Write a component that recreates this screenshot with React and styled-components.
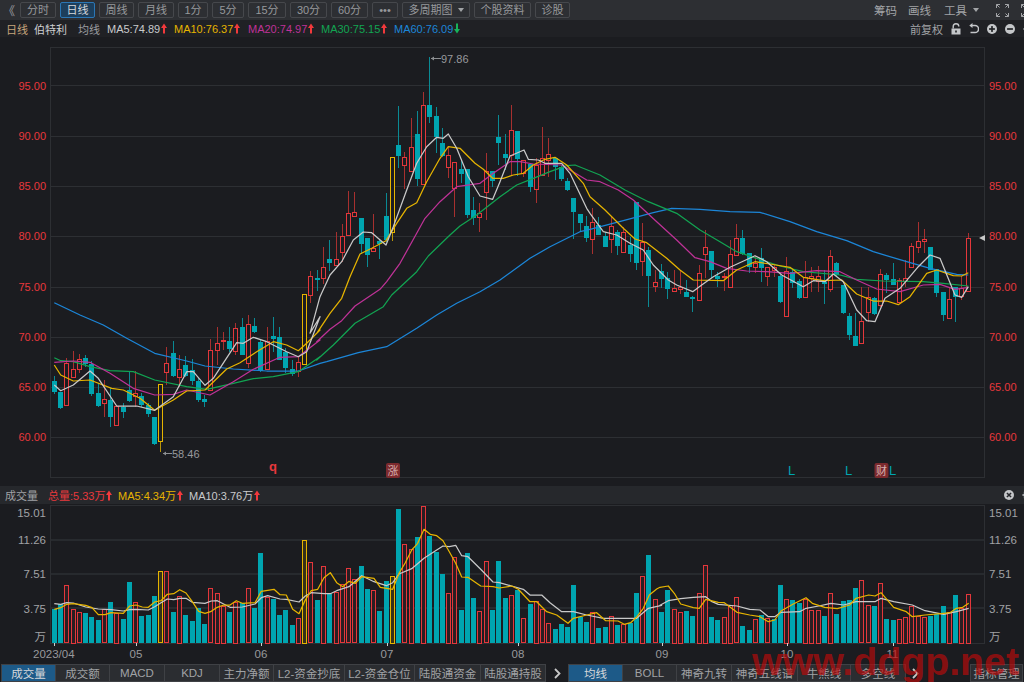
import styled, { createGlobalStyle } from 'styled-components';

const GlobalStyle = createGlobalStyle`
  html, body { margin: 0; padding: 0; background: #1b1c20; }
  body { font-family: "Liberation Sans", "Noto Sans CJK SC", sans-serif; }
`;

const TEAL = '#00a5b0';
const RED = '#e4373b';
const GOLD = '#e6b400';
const WHITE = '#c9c9c9';
const MAGENTA = '#bf3297';
const GREEN = '#12a452';
const BLUE = '#1c86d8';
const GRID = '#2d2f33';

const Page = styled.div`
  position: relative;
  width: 1024px;
  height: 682px;
  overflow: hidden;
  background: #1b1c20;
  display: flex;
  flex-direction: column;
  font-size: 11px;
  color: #9c9ea1;
`;

const Toolbar = styled.div`
  height: 20px;
  flex: none;
  display: flex;
  align-items: center;
  gap: 4px;
  background: #2d2f33;
  padding-left: 3px;
  overflow: hidden;
`;

const Collapse = styled.span`
  width: 13px;
  font-size: 12px;
  color: #9c9ea1;
`;

const ToolButton = styled.div`
  width: ${p => p.$w}px;
  height: 16px;
  flex: none;
  box-sizing: border-box;
  display: flex;
  align-items: center;
  justify-content: center;
  gap: 5px;
  border: 1px solid ${p => (p.$active ? '#2b77b5' : '#46484c')};
  border-radius: 2px;
  background: ${p => (p.$active ? '#1d3f5c' : 'transparent')};
  color: ${p => (p.$active ? '#d6d8db' : '#97999c')};
  font-size: 11px;
  line-height: 1;
`;

const ToolSpacer = styled.div`
  flex: 1;
`;

const ToolLink = styled.span`
  flex: none;
  width: ${p => p.$w}px;
  color: #a2a4a7;
  font-size: 11.5px;
  display: flex;
  align-items: center;
  gap: 6px;
  svg { flex: none; }
`;

const Caret = styled.i`
  width: 0;
  height: 0;
  border-left: 3.5px solid transparent;
  border-right: 3.5px solid transparent;
  border-top: 4px solid #a2a4a7;
`;

const InfoBar = styled.div`
  height: 17px;
  flex: none;
  display: flex;
  align-items: center;
  background: #202125;
  padding-left: 6px;
  overflow: hidden;
`;

const InfoText = styled.span`
  flex: none;
  width: ${p => (p.$w ? `${p.$w}px` : 'auto')};
  color: ${p => p.$color || '#9c9ea1'};
  display: flex;
  align-items: center;
  gap: 1px;
  white-space: nowrap;
`;

const InfoIcons = styled.div`
  margin-left: auto;
  display: flex;
  align-items: center;
  gap: 8px;
  width: 120px;
  flex: none;
  margin-right: -6px;
  svg { flex: none; }
`;

const ChartRow = styled.div`
  flex: none;
  display: flex;
  height: ${p => p.$h}px;
  padding-top: ${p => p.$top}px;
  box-sizing: border-box;
`;

const LeftAxis = styled.div`
  width: 50px;
  flex: none;
  display: flex;
  flex-direction: column;
  align-items: flex-end;
  padding: ${p => p.$pad}px 4px 0 0;
  box-sizing: border-box;
`;

const RightAxis = styled.div`
  width: 39px;
  flex: none;
  display: flex;
  flex-direction: column;
  align-items: flex-start;
  padding: ${p => p.$pad}px 0 0 4px;
  box-sizing: border-box;
`;

const PriceLabel = styled.div`
  height: 50.2px;
  line-height: 50.2px;
  color: #e8383c;
  font-size: 11px;
`;

const VolLabel = styled.div`
  height: 14px;
  line-height: 14px;
  margin-top: ${p => p.$gap}px;
  color: #a0a2a5;
  font-size: 11.5px;
`;

const Plot = styled.svg`
  display: block;
  flex: none;
  width: 935px;
  height: ${p => p.$h}px;
  overflow: visible;
`;

const PlotText = styled.text`
  font-family: "Liberation Sans", "Noto Sans CJK SC", sans-serif;
  font-size: ${p => p.$size || 11}px;
  font-weight: ${p => (p.$bold ? 700 : 400)};
  fill: ${p => p.$color || '#98999c'};
`;

const VolHeader = styled.div`
  height: 18px;
  flex: none;
  display: flex;
  align-items: center;
  background: #26282c;
  padding-left: 5px;
  overflow: hidden;
`;

const XAxis = styled.svg`
  display: block;
  flex: none;
  width: 1024px;
  height: 18px;
  overflow: visible;
`;

const TabBar = styled.div`
  height: 18px;
  flex: none;
  display: flex;
  align-items: stretch;
  padding-left: 1px;
  overflow: hidden;
`;

const Tab = styled.div`
  flex: none;
  width: ${p => p.$w}px;
  box-sizing: border-box;
  display: flex;
  align-items: center;
  justify-content: center;
  background: ${p => (p.$active ? '#1d5a88' : '#2b2d31')};
  color: ${p => (p.$active ? '#d6d8db' : '#a0a2a5')};
  border: 1px solid #3f4145;
  border-left-width: ${p => (p.$first ? 1 : 0)}px;
  font-size: 11.5px;
  white-space: nowrap;
  overflow: hidden;
`;

const TabArrow = styled.div`
  flex: none;
  width: ${p => p.$w}px;
  display: flex;
  align-items: center;
  justify-content: ${p => (p.$w > 30 ? 'flex-start' : 'center')};
  padding-left: ${p => (p.$w > 30 ? 6 : 0)}px;
  box-sizing: border-box;
`;

const Watermark = styled.div`
  position: absolute;
  left: 752px;
  top: 640px;
  font-family: "Liberation Sans", sans-serif;
  font-size: 39.3px;
  line-height: 42px;
  font-weight: 700;
  color: rgba(190, 10, 10, 0.68);
  white-space: nowrap;
  pointer-events: none;
`;

// [type, bodyTop, bodyBottom, wickTop, wickBottom], read off the chart in 3x crop coordinates
const candlesA = [
  ['c',243,277,228,282],['c',275,325,275,328],['r',190,317,173,317],['r',208,233,152,233],['r',178,208,162,220],
  ['c',175,192,165,200],['c',192,283,182,287],['c',280,317,250,320],['r',297,310,240,352],['c',300,352,265,380],
  ['r',318,376,318,376],['c',322,335,310,355],['c',270,302,213,305],['r',280,290,212,320],['c',288,316,280,320],
  ['c',316,342,308,350],['c',352,432,352,434],['y',252,424,252,455],['r',188,214,140,255],['c',160,228,122,230],
  ['r',208,232,166,260],['c',195,228,168,232],['c',210,243,177,255],['c',243,300,235,305],['c',297,306,285,320],
  ['r',150,270,117,270],['r',130,152,82,195],['r',121,123,95,150],['c',122,147,82,155],['r',85,155,70,165],
  ['c',82,165,55,165],['r',73,190,45,205],['c',77,97,55,100],['c',125,213,118,217],['r',122,205,80,205],
  ['c',108,118,50,155],['c',112,180,82,180],['c',155,205,145,218],['c',208,222,180,228],['r',187,215,170,230],
];
const candlesB = [
  ['y',733,943,733,943],['r',677,733,662,758],['c',684,690,660,723],['r',650,683,592,702],['c',628,640,570,662],
  ['r',628,645,547,645],['r',558,605,522,635],['r',488,555,423,555],['r',486,497,426,497],['c',505,582,505,612],
  ['c',563,616,563,650],['r',595,603,492,605],['c',572,582,568,628],['c',498,570,430,575],['y',322,547,322,572],
  ['c',286,318,168,355],['r',322,347,305,418],['r',292,365,205,365],['c',252,388,183,408],['r',165,402,127,402],
  ['c',165,200,20,218],['c',198,262,170,310],['c',280,318,235,320],['r',316,352,290,385],['r',335,414,335,500],
  ['c',358,372,330,400],['c',358,495,358,505],['c',480,503,440,525],['r',488,500,458,547],['r',362,425,310,510],
  ['c',362,393,362,410],['c',262,278,195,345],['c',313,325,252,360],['r',240,315,165,378],['c',243,327,243,378],
  ['r',330,370,330,380],['c',342,410,340,425],['r',345,417,325,458],['r',325,375,232,375],['r',313,330,265,380],
  ['c',325,350,320,390],['c',352,388,345,392],['c',392,420,385,423],['c',445,485,445,568],['c',492,520,492,545],
  ['c',528,565,498,575],['r',515,565,475,612],
];
const candlesC = [
  ['c',105,135,80,135],['c',138,170,125,170],['r',108,148,82,188],['c',125,167,120,195],['r',125,185,110,190],
  ['c',165,192,140,215],['c',36,220,36,240],['r',157,215,100,257],['c',180,257,170,352],['r',277,290,240,305],
  ['c',244,267,222,295],['c',264,298,245,328],['r',295,305,240,305],['r',290,295,240,312],['c',306,320,270,320],
  ['c',321,327,318,365],['r',248,330,225,330],['r',172,193,120,265],['c',183,240,183,265],['c',258,267,245,290],
  ['r',258,262,250,303],['r',192,290,150,290],['r',145,195,102,195],['c',145,192,120,195],['c',190,230,190,250],
  ['r',220,232,197,250],['c',205,235,175,275],['r',232,260,232,288],['r',232,240,225,262],['c',258,335,255,340],
  ['r',242,378,200,378],['c',245,280,240,295],['c',272,325,268,328],['r',260,320,212,325],['r',258,263,230,305],
  ['r',257,272,228,305],['c',275,282,240,342],['r',198,298,180,305],['c',218,255,215,262],['c',285,370,285,372],
  ['c',378,435,368,450],['c',438,468,370,468],['r',392,458,290,458],['r',320,365,290,395],['c',325,372,320,375],
  ['r',253,345,238,350],['c',255,270,248,310],['c',267,285,220,285],['r',270,335,265,338],['r',265,275,210,290],
  ['r',168,230,158,230],['r',153,170,97,190],['r',148,155,118,190],['c',170,240,170,240],['c',237,310,237,320],
  ['c',305,375,305,392],['r',328,385,292,385],['c',290,320,290,395],['r',295,320,258,330],['r',143,303,130,305],
];

const toReal = (rows, oy) => rows.map(([t, a, b, c, d]) => [t, oy + a / 3, oy + b / 3, oy + c / 3, oy + d / 3]);
const candles = [...toReal(candlesA, 300), ...toReal(candlesB, 50), ...toReal(candlesC, 190)];

// volume bars: type and top edge, same crop coordinates
const volA = 'c478 c462 r406 r476 r487 c489 c500 c510 r478 c457 r488 c508 c395 r457 c497 c495 c438 y364 r364 c486 r438 c495 c513 c474 c522 r415 r428 r468 c486 r455 c460 r415 c475 c310 r441 c447 c495 c479 c524 r503 y270 r337 c449 r347 c433 r425 r403 r355 r388 c347 c417 r421 c484 c393 y377 c178 r283 r297 c262 r168 c258 c305 c372 r428 r320 c479 c310 c444 r482 r334 c481 c334 c444 r436';
const volB = 'c270 r355 c312 r302 r328 r370 c387 c372 c382 c256 c350 c366 r335 c383 c380 r348 c376 r373 c368 c280 r227 c165 r298 c336 c270 r326 r335 c334 c348 r278 r195 c352 c360 r351 r314 r292 c377 c390 r358 c346 r355 c358 c256 r297 c299 c308 r297 r329 r329 c348 r278 c342 c304 c299 c265 r241 r316 c318 r248 c358 c361 r356 r351 r319 r348 r351 c348 c342 c318 r335 c286 r323 r281';
const parseVol = (str, oy) => str.split(' ').map(s => [s[0], oy + Number(s.slice(1)) / 3]);
const volumes = [...parseVol(volA, 450), ...parseVol(volB, 500)];

const seg = (ox, oy, pts) => pts.map(([x, y]) => [ox + x / 3, oy + y / 3]);
const toPoints = pts => pts.map(([x, y]) => `${x.toFixed(1)},${y.toFixed(1)}`).join(' ');

const lineWhite = [
  ...seg(40, 300, [[43,255],[62,272],[100,255],[150,213],[175,235],[230,318],[290,318],[344,331],[400,290],[440,215],[460,215],[495,256],[520,235],[590,128],[610,130],[640,112],[680,125],[740,155],[775,170],[800,155],[840,50]]),
  ...seg(300, 50, [[30,850],[60,740],[90,675],[125,635],[160,570],[190,546],[215,548],[258,585],[280,530],[320,420],[350,340],[380,290],[410,262],[430,265],[445,252],[470,295],[505,380],[540,438],[578,448],[600,395],[630,318],[672,300],[685,328],[715,330],[735,340],[785,340],[810,370],[860,475]]),
  ...seg(590, 190, [[0,70],[40,125],[80,135],[120,160],[160,180],[190,225],[235,270],[260,285],[308,305],[335,285],[370,260],[420,232],[495,197],[530,215],[575,255],[640,290],[670,272],[705,275],[730,252],[760,275],[800,360],[830,392],[855,395],[885,325],[930,295],[985,230],[1020,195],[1050,205],[1095,315],[1115,322],[1135,290]]),
];
const lineGold = [
  ...seg(40, 300, [[43,195],[62,225],[100,243],[150,240],[215,265],[250,270],[300,295],[344,331],[400,300],[440,273],[495,270],[560,207],[600,188],[650,155],[700,125],[740,135],[775,152],[800,130],[840,90]]),
  ...seg(300, 50, [[50,850],[90,790],[125,745],[150,680],[180,612],[215,595],[258,572],[290,520],[320,475],[350,458],[380,395],[420,325],[445,290],[480,295],[525,340],[550,358],[578,385],[610,385],[640,375],[670,370],[700,345],[735,328],[765,322],[800,345],[850,400]]),
  ...seg(590, 190, [[0,20],[45,60],[100,115],[135,147],[170,158],[230,205],[270,240],[310,270],[400,272],[440,240],[495,215],[540,222],[600,232],[640,262],[700,272],[755,270],[800,312],[850,333],[890,333],[925,344],[960,320],[1010,250],[1040,240],[1090,257],[1115,258],[1135,248]]),
];
const lineMagenta = [
  ...seg(40, 300, [[43,187],[100,183],[150,187],[210,220],[280,265],[344,285],[400,283],[440,270],[510,285],[580,245],[640,208],[720,172],[775,170],[840,120]]),
  ...seg(300, 50, [[50,875],[90,838],[125,812],[165,768],[240,718],[260,695],[300,640],[350,550],[375,505],[420,455],[470,410],[540,400],[580,370],[630,335],[660,335],[700,342],[785,345],[860,390],[900,395]]),
  ...seg(590, 190, [[85,0],[130,30],[200,95],[260,150],[315,203],[360,215],[410,235],[470,243],[530,245],[600,250],[680,242],[750,245],[800,270],[860,297],[930,305],[1000,285],[1050,283],[1095,298],[1135,292]]),
];
const lineGreen = [
  ...seg(40, 300, [[43,173],[62,182],[100,185],[150,200],[210,212],[280,215],[344,240],[440,260],[500,268],[580,250],[640,236],[700,230],[775,215],[840,170]]),
  ...seg(300, 50, [[50,930],[100,885],[130,855],[165,820],[250,770],[275,735],[350,665],[385,618],[450,555],[480,528],[530,495],[600,440],[650,405],[700,385],[750,365],[800,347],[825,345],[900,375]]),
  ...seg(590, 190, [[105,0],[175,35],[260,70],[330,120],[390,155],[440,185],[500,205],[570,228],[640,245],[750,255],[800,268],[880,273],[1000,275],[1060,280],[1135,288]]),
];
const lineBlue = [
  ...seg(40, 300, [[43,8],[120,45],[190,75],[260,115],[344,160],[440,183],[495,198],[580,207],[680,213],[775,213],[840,190]]),
  ...seg(300, 50, [[80,935],[175,908],[260,890],[350,835],[410,795],[470,760],[540,725],[600,690],[690,625],[750,590],[840,545]]),
  ...seg(590, 190, [[0,118],[100,92],[190,68],[245,55],[330,58],[420,65],[510,67],[600,95],[680,125],[770,152],[850,185],[940,212],[1020,235],[1100,253],[1135,255]]),
];
const volGold = [
  ...seg(0, 450, [[163,478],[182,473],[200,463],[220,461],[257,466],[276,473],[295,494],[315,494],[333,488],[370,490],[389,468],[408,465],[427,471],[445,472],[464,456],[483,452],[502,433],[521,431],[539,419],[558,429],[577,455],[596,484],[615,490],[634,484],[652,472],[671,465],[690,465],[709,452],[727,460],[765,458],[784,424],[822,418],[840,434],[859,435],[878,478],[897,491],[916,450],[934,422],[953,418],[972,383],[991,368],[1010,398],[1028,410],[1047,394],[1066,400],[1085,380],[1122,385],[1141,412],[1178,418],[1197,370],[1216,338],[1235,300],[1253,280],[1272,238],[1291,253],[1310,257],[1329,272],[1348,305],[1367,340],[1385,381],[1404,382],[1442,408],[1479,410],[1498,414]]),
  ...seg(340, 500, [[515,258],[535,268],[570,305],[590,305],[620,335],[650,345],[684,370],[700,355],[740,345],[770,338],[797,362],[834,363],[853,373],[872,368],[891,350],[910,325],[928,285],[950,267]]),
  ...seg(660, 500, [[0,262],[25,258],[43,280],[62,312],[100,323],[118,325],[137,298],[175,307],[193,308],[231,337],[269,345],[300,350],[325,365],[344,360],[363,333],[400,312],[438,293],[457,310],[494,322],[532,326],[569,315],[588,295],[626,285],[645,288],[663,278],[701,322],[739,335],[757,350],[795,345],[851,340],[870,338],[889,325],[908,322],[926,310]]),
];
const volWhite = [
  ...seg(0, 450, [[163,461],[182,463],[200,458],[220,459],[257,471],[295,477],[333,479],[370,483],[389,479],[408,478],[445,480],[464,470],[483,458],[502,447],[521,449],[539,445],[558,445],[577,457],[615,460],[634,453],[652,452],[690,472],[727,471],[765,462],[784,443],[803,437],[840,447],[859,448],[897,456],[916,438],[934,428],[972,431],[991,431],[1010,422],[1047,410],[1085,377],[1122,395],[1159,407],[1178,398],[1197,372],[1235,356],[1272,325],[1310,300],[1329,288],[1348,290],[1367,286],[1385,317],[1404,320],[1442,358],[1479,396],[1498,398]]),
  ...seg(340, 500, [[515,258],[550,268],[570,285],[605,285],[630,308],[665,335],[700,335],[740,345],[790,355],[890,355],[925,325],[965,316]]),
  ...seg(660, 500, [[0,316],[25,302],[62,296],[100,292],[137,290],[156,305],[175,313],[231,318],[269,328],[300,330],[325,350],[344,350],[363,337],[419,335],[438,325],[476,318],[513,310],[551,315],[588,305],[645,305],[663,295],[701,305],[757,315],[795,332],[851,343],[889,335],[926,325]]),
];

const barX = i => Math.round(53.8 + 6.26 * i);
const typeColor = { c: TEAL, r: RED, y: GOLD };
const wickColor = { c: '#0a8a94', r: '#a8302f', y: '#b8940a' };
const hollowFill = { r: '#2a1e22', y: '#35301a' };

function Candle({ i, data }) {
  const [type, top, bottom, wickTop, wickBottom] = data;
  const x = barX(i);
  const color = typeColor[type];
  return (
    <g shapeRendering="crispEdges">
      <rect x={x} y={wickTop} width={1} height={Math.max(wickBottom - wickTop, 1)} fill={wickColor[type]} />
      {type === 'c' ? (
        <rect x={x - 2} y={top} width={5} height={Math.max(bottom - top, 2)} fill={color} />
      ) : (
        <rect x={x - 1.5} y={Math.round(top) + 0.5} width={4} height={Math.max(Math.round(bottom - top), 1)} fill="#1b1c20" stroke={color} />
      )}
    </g>
  );
}

function VolumeBar({ i, data }) {
  const [type, top] = data;
  const x = barX(i);
  return (
    <g shapeRendering="crispEdges">
      {type === 'c' ? (
        <rect x={x - 2} y={top} width={5} height={643 - top} fill={TEAL} />
      ) : (
        <rect x={x - 1.5} y={Math.round(top) + 0.5} width={4} height={Math.round(642.5 - top)} fill={hollowFill[type]} stroke={typeColor[type]} />
      )}
    </g>
  );
}

function MaLine({ pts, color, width = 1.25 }) {
  return <polyline points={toPoints(pts)} fill="none" stroke={color} strokeWidth={width} strokeLinejoin="round" />;
}

function Arrow({ up = true }) {
  const color = up ? '#f2393c' : '#17b35b';
  return (
    <svg width="6" height="11" viewBox="0 0 6 11">
      {up ? <path d="M3 0.5 L6 5 L4 5 L4 10.5 L2 10.5 L2 5 L0 5 Z" fill={color} /> : <path d="M3 10.5 L6 6 L4 6 L4 0.5 L2 0.5 L2 6 L0 6 Z" fill={color} />}
    </svg>
  );
}

function RoundIcon({ kind, size = 10 }) {
  return (
    <svg width={size} height={size} viewBox="0 0 12 12">
      <circle cx="6" cy="6" r="6" fill="#c4c6c9" />
      {kind !== 'close' && <rect x="2.5" y="5" width="7" height="2" fill="#202125" />}
      {kind === 'plus' && <rect x="5" y="2.5" width="2" height="7" fill="#202125" />}
      {kind === 'close' && <path d="M3.5 3.5 L8.5 8.5 M8.5 3.5 L3.5 8.5" stroke="#26282c" strokeWidth="1.8" />}
    </svg>
  );
}

function LockIcon() {
  return (
    <svg width="10" height="12" viewBox="0 0 10 12">
      <path d="M2.2 5.5 V3.5 A2.8 2.8 0 0 1 7.8 3.5" fill="none" stroke="#c4c6c9" strokeWidth="1.4" />
      <path d="M0.5 5.5 H9.5 V11.5 H0.5 Z M4.2 7.5 V9.5 H5.8 V7.5 Z" fill="#c4c6c9" fillRule="evenodd" />
    </svg>
  );
}

function UndoIcon() {
  return (
    <svg width="10" height="11" viewBox="0 0 10 11">
      <path d="M2.5 2.5 H6 A3.2 3.2 0 0 1 6 9.6 H1.5" fill="none" stroke="#c4c6c9" strokeWidth="1.5" />
      <path d="M3.5 0 V5 L0.3 2.5 Z" fill="#c4c6c9" />
    </svg>
  );
}

function ExpandIcon() {
  return (
    <svg width="13" height="13" viewBox="0 0 13 13" fill="none" stroke="#a2a4a7" strokeWidth="1">
      <path d="M0.5 4 V0.5 H4 M0.5 0.5 L3.5 3.5 M9 0.5 H12.5 V4 M12.5 0.5 L9.5 3.5 M0.5 9 V12.5 H4 M0.5 12.5 L3.5 9.5 M12.5 9 V12.5 H9 M12.5 12.5 L9.5 9.5" />
    </svg>
  );
}

function CutPlus() {
  return (
    <svg width="10" height="10" viewBox="0 0 12 12" fill="none" stroke="#c4c6c9" strokeWidth="1.6">
      <path d="M6 0.5 V11.5 M0.5 6 H11.5 M3 3 H9 V9 H3 Z" />
    </svg>
  );
}

function ChevronRight() {
  return (
    <svg width="7" height="11" viewBox="0 0 7 11">
      <path d="M1 1 L5.5 5.5 L1 10" fill="none" stroke="#c8c8c8" strokeWidth="1.8" />
    </svg>
  );
}

const priceAxis = ['95.00', '90.00', '85.00', '80.00', '75.00', '70.00', '65.00', '60.00'];
const priceGrid = [85.5, 136, 186, 236.5, 287, 337, 387, 437];
const volAxis = [['15.01', 1], ['11.26', 13], ['7.51', 20], ['3.75', 21], ['万', 14]];
const months = [['2023/04', 54], ['05', 136], ['06', 261], ['07', 387], ['08', 518], ['09', 662], ['10', 787], ['11', 893]];

const periods = [
  ['分时', 36], ['日线', 35, true], ['周线', 35], ['月线', 36], ['1分', 30], ['5分', 32], ['15分', 38],
  ['30分', 37], ['60分', 37], ['•••', 26],
];
const tabsLeft = [
  ['成交量', 55, true], ['成交额', 54], ['MACD', 55], ['KDJ', 55], ['主力净额', 54], ['L2-资金抄底', 71],
  ['L2-资金仓位', 70], ['陆股通资金', 66], ['陆股通持股', 65],
];
const tabsRight = [
  ['均线', 55, true], ['BOLL', 54], ['神奇九转', 55], ['神奇五线谱', 66], ['牛熊线', 53], ['多空线', 55],
];

function PriceChart() {
  return (
    <Plot $h={431} viewBox="50 47 935 431">
      <rect x="50.5" y="47.5" width="934" height="430" fill="none" stroke={GRID} />
      {priceGrid.map(y => <line key={y} x1="50" x2="985" y1={y} y2={y} stroke={GRID} shapeRendering="crispEdges" />)}
      {candles.map((c, i) => <Candle key={i} i={i} data={c} />)}
      <MaLine pts={lineBlue} color={BLUE} />
      <MaLine pts={lineGreen} color={GREEN} />
      <MaLine pts={lineMagenta} color={MAGENTA} />
      <MaLine pts={lineGold} color={GOLD} />
      <MaLine pts={lineWhite} color={WHITE} />
      <line x1="431" x2="441" y1="58.5" y2="58.5" stroke="#8d8f92" />
      <path d="M431 58.5 l3 -2 v4 Z" fill="#8d8f92" />
      <PlotText x="441" y="62.5">97.86</PlotText>
      <line x1="163" x2="172" y1="453.5" y2="453.5" stroke="#8d8f92" />
      <path d="M163 453.5 l3 -2 v4 Z" fill="#8d8f92" />
      <PlotText x="172" y="457.5">58.46</PlotText>
      <path d="M979 238 l6 -3 v6 Z" fill="#c8c8c8" />
      <PlotText x="269" y="471" $size={13} $bold $color="#e8383c">q</PlotText>
      <rect x="386" y="463" width="14" height="15" rx="2" fill="#7c2a2e" />
      <PlotText x="387.5" y="475" $color="#d8b0b0">涨</PlotText>
      <PlotText x="788" y="475" $size={13} $color={TEAL}>L</PlotText>
      <PlotText x="845" y="475" $size={13} $color={TEAL}>L</PlotText>
      <rect x="874.5" y="463" width="14" height="15" rx="2" fill="#7c2a2e" />
      <PlotText x="876" y="475" $color="#d8b0b0">财</PlotText>
      <PlotText x="889" y="475" $size={13} $color={TEAL}>L</PlotText>
    </Plot>
  );
}

function VolumeChart() {
  return (
    <Plot $h={140} viewBox="50 505 935 140">
      <rect x="50.5" y="505.5" width="934" height="138" fill="none" stroke={GRID} />
      {[540, 574, 608].map(y => <line key={y} x1="50" x2="985" y1={y} y2={y} stroke={GRID} strokeWidth="1.5" />)}
      {volumes.map((v, i) => <VolumeBar key={i} i={i} data={v} />)}
      <MaLine pts={volWhite} color={WHITE} />
      <MaLine pts={volGold} color={GOLD} />
    </Plot>
  );
}

export default function App() {
  return (
    <Page>
      <GlobalStyle />
      <Toolbar>
        <Collapse>《</Collapse>
        {periods.map(([label, w, active]) => <ToolButton key={label} $w={w} $active={active}>{label}</ToolButton>)}
        <ToolButton $w={68}>多周期图<Caret /></ToolButton>
        <ToolButton $w={57}>个股资料</ToolButton>
        <ToolButton $w={35}>诊股</ToolButton>
        <ToolSpacer />
        <ToolLink $w={30}>筹码</ToolLink>
        <ToolLink $w={32}>画线</ToolLink>
        <ToolLink $w={48}>工具<Caret /></ToolLink>
        <ToolLink $w={21}><ExpandIcon /></ToolLink>
        <ToolLink $w={3}><ExpandIcon /></ToolLink>
      </Toolbar>

      <InfoBar>
        <InfoText $w={28} $color="#c6a57c">日线</InfoText>
        <InfoText $w={44} $color="#cfd0d2">伯特利</InfoText>
        <InfoText $w={29}>均线</InfoText>
        <InfoText $w={67} $color="#c9cacc">MA5:74.89<Arrow /></InfoText>
        <InfoText $w={74} $color={GOLD}>MA10:76.37<Arrow /></InfoText>
        <InfoText $w={73} $color={MAGENTA}>MA20:74.97<Arrow /></InfoText>
        <InfoText $w={73} $color={GREEN}>MA30:75.15<Arrow /></InfoText>
        <InfoText $color={BLUE}>MA60:76.09<Arrow up={false} /></InfoText>
        <InfoIcons>
          <InfoText $w={33} $color="#a2a4a7">前复权</InfoText>
          <LockIcon />
          <UndoIcon />
          <RoundIcon kind="plus" />
          <RoundIcon kind="minus" />
          <CutPlus />
        </InfoIcons>
      </InfoBar>

      <ChartRow $h={449} $top={10}>
        <LeftAxis $pad={13.8}>
          {priceAxis.map(p => <PriceLabel key={p}>{p}</PriceLabel>)}
        </LeftAxis>
        <PriceChart />
        <RightAxis $pad={13.8}>
          {priceAxis.map(p => <PriceLabel key={p}>{p}</PriceLabel>)}
        </RightAxis>
      </ChartRow>

      <VolHeader>
        <InfoText $w={43} $color="#a0a2a5">成交量</InfoText>
        <InfoText $w={70} $color="#e8383c">总量:5.33万<Arrow /></InfoText>
        <InfoText $w={71} $color={GOLD}>MA5:4.34万<Arrow /></InfoText>
        <InfoText $color="#c9cacc">MA10:3.76万<Arrow /></InfoText>
        <InfoIcons>
          <InfoText $w={86} />
          <RoundIcon kind="close" />
          <CutPlus />
        </InfoIcons>
      </VolHeader>

      <ChartRow $h={142} $top={1}>
        <LeftAxis $pad={0}>
          {volAxis.map(([t, gap]) => <VolLabel key={t} $gap={gap}>{t}</VolLabel>)}
        </LeftAxis>
        <VolumeChart />
        <RightAxis $pad={0}>
          {volAxis.map(([t, gap]) => <VolLabel key={t} $gap={gap}>{t}</VolLabel>)}
        </RightAxis>
      </ChartRow>

      <XAxis viewBox="0 0 1024 18">
        {months.map(([label, x]) => (
          <g key={label}>
            <line x1={x + 0.5} x2={x + 0.5} y1="-3" y2="0" stroke="#d0d0d0" />
            <PlotText x={label.length > 2 ? 33 : x - 6.5} y="12" $size={11.5}>{label}</PlotText>
          </g>
        ))}
      </XAxis>

      <TabBar>
        {tabsLeft.map(([label, w, active], i) => <Tab key={label} $w={w} $active={active} $first={i === 0}>{label}</Tab>)}
        <TabArrow $w={22}><ChevronRight /></TabArrow>
        {tabsRight.map(([label, w, active], i) => <Tab key={label} $w={w} $active={active} $first={i === 0}>{label}</Tab>)}
        <TabArrow $w={64}><ChevronRight /></TabArrow>
        <Tab $w={53} $first>指标管理</Tab>
      </TabBar>

      <Watermark>www.ddgp.net</Watermark>
    </Page>
  );
}
